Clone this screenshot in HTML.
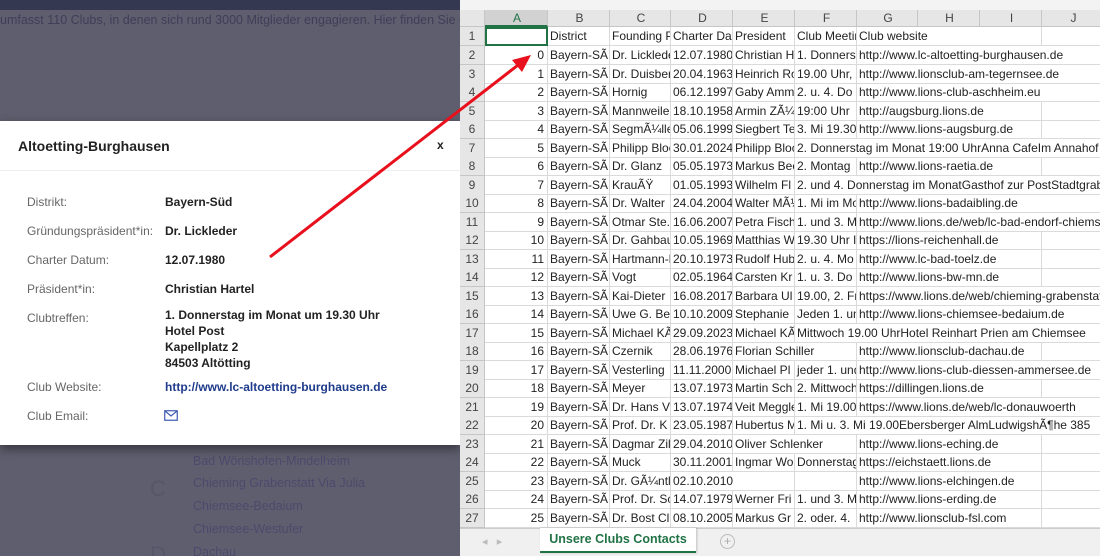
<!DOCTYPE html>
<html><head><meta charset="utf-8"><style>
*{margin:0;padding:0;box-sizing:border-box}
html,body{width:1100px;height:556px;overflow:hidden}
body{position:relative;background:#5f5e6e;font-family:"Liberation Sans",sans-serif}
.topbar{position:absolute;left:0;top:0;width:460px;height:10px;background:#343850}
.bgtext{position:absolute;color:#4b4a6c;font-size:12.5px;white-space:nowrap}
.modal{position:absolute;left:0;top:121px;width:460px;height:324px;background:#fff;box-shadow:0 4px 10px rgba(0,0,0,.45)}
.modal h1{position:absolute;left:18px;top:17px;font-size:14px;font-weight:bold;color:#222}
.modal .x{position:absolute;left:437px;top:17px;font-size:12px;font-weight:bold;color:#222}
.modal .hr{position:absolute;left:0;top:49px;width:460px;height:1px;background:#eee}
.lb{position:absolute;left:27px;font-size:12px;color:#666}
.vl{position:absolute;left:165px;font-size:12px;font-weight:bold;color:#222;line-height:16px}
.xl{position:absolute;left:460px;top:0;width:640px;height:556px;background:#fff;font-size:12px;color:#222;overflow:hidden}
.tb{position:absolute;left:0;top:0;width:640px;height:10px;background:#f3f3f3}
.row{position:absolute;left:0;height:19px;display:flex;width:700px}
.row span{display:block;flex:none;height:19px;line-height:18px;white-space:nowrap;overflow:hidden;border-right:1px solid #dadada;border-bottom:1px solid #dadada;padding-left:2px}
.row span.h{width:25px;background:#e6e6e6;color:#444;text-align:center;padding:0;border-color:#c6c6c6;font-size:12px}
.row span.a{width:63px;text-align:right;padding-right:3px}
.hdr span{background:#e6e6e6;text-align:center;color:#444;border-color:#c6c6c6;height:17px;line-height:17px}
.tabs{position:absolute;left:0;top:528px;width:640px;height:28px;background:#f0f0f0;border-top:1px solid #ccc}
.tab{position:absolute;left:80px;top:-1px;width:156px;height:25px;background:#fff;border-bottom:2px solid #217346;color:#217346;font-weight:bold;font-size:12.5px;text-align:center;line-height:22px;box-shadow:1px 0 2px rgba(0,0,0,.2)}
</style></head><body>
<div class="topbar"></div>
<div class="bgtext" style="left:0;top:13px;color:#3e3e58">umfasst 110 Clubs, in denen sich rund 3000 Mitglieder engagieren. Hier finden Sie den Cl</div>
<div class="bgtext" style="left:193px;top:454px">Bad Wörishofen-Mindelheim</div>
<div class="bgtext" style="left:150px;top:476px;font-size:22px;color:#56566a">C</div>
<div class="bgtext" style="left:193px;top:476px">Chieming Grabenstatt Via Julia</div>
<div class="bgtext" style="left:193px;top:499px">Chiemsee-Bedaium</div>
<div class="bgtext" style="left:193px;top:522px">Chiemsee-Westufer</div>
<div class="bgtext" style="left:150px;top:542px;font-size:22px;color:#56566a">D</div>
<div class="bgtext" style="left:193px;top:545px">Dachau</div>

<div class="modal">
<h1>Altoetting-Burghausen</h1><div class="x">x</div><div class="hr"></div>
<div class="lb" style="top:74px">Distrikt:</div><div class="vl" style="top:73px">Bayern-Süd</div>
<div class="lb" style="top:103px">Gründungspräsident*in:</div><div class="vl" style="top:102px">Dr. Lickleder</div>
<div class="lb" style="top:132px">Charter Datum:</div><div class="vl" style="top:131px">12.07.1980</div>
<div class="lb" style="top:161px">Präsident*in:</div><div class="vl" style="top:160px">Christian Hartel</div>
<div class="lb" style="top:190px">Clubtreffen:</div><div class="vl" style="top:186px">1. Donnerstag im Monat um 19.30 Uhr<br>Hotel Post<br>Kapellplatz 2<br>84503 Altötting</div>
<div class="lb" style="top:259px">Club Website:</div><div class="vl" style="top:258px;color:#1f3c8c">http://www.lc-altoetting-burghausen.de</div>
<div class="lb" style="top:288px">Club Email:</div>
<svg style="position:absolute;left:164px;top:289px" width="14" height="11" viewBox="0 0 14 11"><rect x="0.75" y="0.75" width="12.5" height="9.5" fill="none" stroke="#3d5bb0" stroke-width="1.2"/><path d="M1 1 L7 6 L13 1" fill="none" stroke="#3d5bb0" stroke-width="1.2"/></svg>
</div>

<div class="xl">
<div class="tb"></div>
<div class="row hdr" style="top:10px"><span class="h" style="height:17px;background:#e6e6e6"></span><span style="width:63px;background:#d2d2d2;color:#217346;border-bottom:2px solid #217346">A</span><span style="width:62px">B</span><span style="width:61px">C</span><span style="width:62px">D</span><span style="width:62px">E</span><span style="width:62px">F</span><span style="width:61px">G</span><span style="width:62px">H</span><span style="width:62px">I</span><span style="width:62px">J</span></div>
<div class="row" style="top:27px"><span class="h">1</span><span class="a" style="border:2px solid #217346"></span><span style="width:62px">District</span><span style="width:61px">Founding President</span><span style="width:62px">Charter Date</span><span style="width:62px">President</span><span style="width:62px">Club Meeting</span><span style="width:185px">Club website</span><span style="width:62px"></span></div>
<div class="row" style="top:46px"><span class="h">2</span><span class="a">0</span><span style="width:62px">Bayern-SÃ</span><span style="width:61px">Dr. Lickleder</span><span style="width:62px">12.07.1980</span><span style="width:62px">Christian Hartel</span><span style="width:62px">1. Donnerstag</span><span style="width:247px">http://www.lc-altoetting-burghausen.de</span></div>
<div class="row" style="top:64.5px"><span class="h">3</span><span class="a">1</span><span style="width:62px">Bayern-SÃ</span><span style="width:61px">Dr. Duisberg</span><span style="width:62px">20.04.1963</span><span style="width:62px">Heinrich Ro</span><span style="width:62px">19.00 Uhr, x</span><span style="width:247px">http://www.lionsclub-am-tegernsee.de</span></div>
<div class="row" style="top:83px"><span class="h">4</span><span class="a">2</span><span style="width:62px">Bayern-SÃ</span><span style="width:61px">Hornig</span><span style="width:62px">06.12.1997</span><span style="width:62px">Gaby Ammer</span><span style="width:62px">2. u. 4. Do</span><span style="width:247px">http://www.lions-club-aschheim.eu</span></div>
<div class="row" style="top:101.5px"><span class="h">5</span><span class="a">3</span><span style="width:62px">Bayern-SÃ</span><span style="width:61px">Mannweiler</span><span style="width:62px">18.10.1958</span><span style="width:62px">Armin ZÃ¼rn</span><span style="width:62px">19:00 Uhr</span><span style="width:185px">http://augsburg.lions.de</span><span style="width:62px"></span></div>
<div class="row" style="top:120px"><span class="h">6</span><span class="a">4</span><span style="width:62px">Bayern-SÃ</span><span style="width:61px">SegmÃ¼ller</span><span style="width:62px">05.06.1999</span><span style="width:62px">Siegbert Teuf</span><span style="width:62px">3. Mi 19.30</span><span style="width:185px">http://www.lions-augsburg.de</span><span style="width:62px"></span></div>
<div class="row" style="top:138.5px"><span class="h">7</span><span class="a">5</span><span style="width:62px">Bayern-SÃ</span><span style="width:61px">Philipp Bloch</span><span style="width:62px">30.01.2024</span><span style="width:62px">Philipp Bloch</span><span style="width:309px">2. Donnerstag im Monat 19:00 UhrAnna CafeIm Annahof</span></div>
<div class="row" style="top:157px"><span class="h">8</span><span class="a">6</span><span style="width:62px">Bayern-SÃ</span><span style="width:61px">Dr. Glanz</span><span style="width:62px">05.05.1973</span><span style="width:62px">Markus Beck</span><span style="width:62px">2. Montag</span><span style="width:185px">http://www.lions-raetia.de</span><span style="width:62px"></span></div>
<div class="row" style="top:175.5px"><span class="h">9</span><span class="a">7</span><span style="width:62px">Bayern-SÃ</span><span style="width:61px">KrauÃŸ</span><span style="width:62px">01.05.1993</span><span style="width:62px">Wilhelm Fl</span><span style="width:309px">2. und 4. Donnerstag im MonatGasthof zur PostStadtgraben</span></div>
<div class="row" style="top:194px"><span class="h">10</span><span class="a">8</span><span style="width:62px">Bayern-SÃ</span><span style="width:61px">Dr. Walter</span><span style="width:62px">24.04.2004</span><span style="width:62px">Walter MÃ¼</span><span style="width:62px">1. Mi im Mo</span><span style="width:247px">http://www.lions-badaibling.de</span></div>
<div class="row" style="top:212.5px"><span class="h">11</span><span class="a">9</span><span style="width:62px">Bayern-SÃ</span><span style="width:61px">Otmar Ste.</span><span style="width:62px">16.06.2007</span><span style="width:62px">Petra Fischer</span><span style="width:62px">1. und 3. Mi</span><span style="width:247px">http://www.lions.de/web/lc-bad-endorf-chiemsee</span></div>
<div class="row" style="top:231px"><span class="h">12</span><span class="a">10</span><span style="width:62px">Bayern-SÃ</span><span style="width:61px">Dr. Gahbauer</span><span style="width:62px">10.05.1969</span><span style="width:62px">Matthias W</span><span style="width:62px">19.30 Uhr Im</span><span style="width:185px">https://lions-reichenhall.de</span><span style="width:62px"></span></div>
<div class="row" style="top:249.5px"><span class="h">13</span><span class="a">11</span><span style="width:62px">Bayern-SÃ</span><span style="width:61px">Hartmann-B</span><span style="width:62px">20.10.1973</span><span style="width:62px">Rudolf Hub</span><span style="width:62px">2. u. 4. Mo</span><span style="width:185px">http://www.lc-bad-toelz.de</span><span style="width:62px"></span></div>
<div class="row" style="top:268px"><span class="h">14</span><span class="a">12</span><span style="width:62px">Bayern-SÃ</span><span style="width:61px">Vogt</span><span style="width:62px">02.05.1964</span><span style="width:62px">Carsten Kr</span><span style="width:62px">1. u. 3. Do</span><span style="width:185px">http://www.lions-bw-mn.de</span><span style="width:62px"></span></div>
<div class="row" style="top:286.5px"><span class="h">15</span><span class="a">13</span><span style="width:62px">Bayern-SÃ</span><span style="width:61px">Kai-Dieter</span><span style="width:62px">16.08.2017</span><span style="width:62px">Barbara Ul</span><span style="width:62px">19.00, 2. Fr</span><span style="width:247px">https://www.lions.de/web/chieming-grabenstatt</span></div>
<div class="row" style="top:305px"><span class="h">16</span><span class="a">14</span><span style="width:62px">Bayern-SÃ</span><span style="width:61px">Uwe G. Be</span><span style="width:62px">10.10.2009</span><span style="width:62px">Stephanie</span><span style="width:62px">Jeden 1. und</span><span style="width:247px">http://www.lions-chiemsee-bedaium.de</span></div>
<div class="row" style="top:323.5px"><span class="h">17</span><span class="a">15</span><span style="width:62px">Bayern-SÃ</span><span style="width:61px">Michael KÃ</span><span style="width:62px">29.09.2023</span><span style="width:62px">Michael KÃ</span><span style="width:309px">Mittwoch 19.00 UhrHotel Reinhart Prien am Chiemsee</span></div>
<div class="row" style="top:342px"><span class="h">18</span><span class="a">16</span><span style="width:62px">Bayern-SÃ</span><span style="width:61px">Czernik</span><span style="width:62px">28.06.1976</span><span style="width:124px">Florian Schiller</span><span style="width:185px">http://www.lionsclub-dachau.de</span><span style="width:62px"></span></div>
<div class="row" style="top:360.5px"><span class="h">19</span><span class="a">17</span><span style="width:62px">Bayern-SÃ</span><span style="width:61px">Vesterling</span><span style="width:62px">11.11.2000</span><span style="width:62px">Michael Pl</span><span style="width:62px">jeder 1. und</span><span style="width:247px">http://www.lions-club-diessen-ammersee.de</span></div>
<div class="row" style="top:379px"><span class="h">20</span><span class="a">18</span><span style="width:62px">Bayern-SÃ</span><span style="width:61px">Meyer</span><span style="width:62px">13.07.1973</span><span style="width:62px">Martin Sch</span><span style="width:62px">2. Mittwoch</span><span style="width:185px">https://dillingen.lions.de</span><span style="width:62px"></span></div>
<div class="row" style="top:397.5px"><span class="h">21</span><span class="a">19</span><span style="width:62px">Bayern-SÃ</span><span style="width:61px">Dr. Hans V</span><span style="width:62px">13.07.1974</span><span style="width:62px">Veit Meggle</span><span style="width:62px">1. Mi 19.00</span><span style="width:247px">https://www.lions.de/web/lc-donauwoerth</span></div>
<div class="row" style="top:416px"><span class="h">22</span><span class="a">20</span><span style="width:62px">Bayern-SÃ</span><span style="width:61px">Prof. Dr. K</span><span style="width:62px">23.05.1987</span><span style="width:62px">Hubertus M</span><span style="width:309px">1. Mi u. 3. Mi 19.00Ebersberger AlmLudwigshÃ¶he 385</span></div>
<div class="row" style="top:434.5px"><span class="h">23</span><span class="a">21</span><span style="width:62px">Bayern-SÃ</span><span style="width:61px">Dagmar Zil</span><span style="width:62px">29.04.2010</span><span style="width:124px">Oliver Schlenker</span><span style="width:185px">http://www.lions-eching.de</span><span style="width:62px"></span></div>
<div class="row" style="top:453px"><span class="h">24</span><span class="a">22</span><span style="width:62px">Bayern-SÃ</span><span style="width:61px">Muck</span><span style="width:62px">30.11.2001</span><span style="width:62px">Ingmar Wolf</span><span style="width:62px">Donnerstag</span><span style="width:185px">https://eichstaett.lions.de</span><span style="width:62px"></span></div>
<div class="row" style="top:471.5px"><span class="h">25</span><span class="a">23</span><span style="width:62px">Bayern-SÃ</span><span style="width:61px">Dr. GÃ¼ntl</span><span style="width:124px">02.10.2010</span><span style="width:62px"></span><span style="width:185px">http://www.lions-elchingen.de</span><span style="width:62px"></span></div>
<div class="row" style="top:490px"><span class="h">26</span><span class="a">24</span><span style="width:62px">Bayern-SÃ</span><span style="width:61px">Prof. Dr. Sc</span><span style="width:62px">14.07.1979</span><span style="width:62px">Werner Fri</span><span style="width:62px">1. und 3. Mi</span><span style="width:185px">http://www.lions-erding.de</span><span style="width:62px"></span></div>
<div class="row" style="top:508.5px"><span class="h">27</span><span class="a">25</span><span style="width:62px">Bayern-SÃ</span><span style="width:61px">Dr. Bost Cl</span><span style="width:62px">08.10.2005</span><span style="width:62px">Markus Gr</span><span style="width:62px">2. oder. 4.</span><span style="width:185px">http://www.lionsclub-fsl.com</span><span style="width:62px"></span></div>
<div class="tabs"><span style="position:absolute;left:22px;top:6px;color:#bbb;font-size:11px">◂ &nbsp; ▸</span><div class="tab">Unsere Clubs Contacts</div><span style="position:absolute;left:260px;top:5px;width:15px;height:15px;border:1px solid #bbb;border-radius:50%;color:#aaa;font-size:12px;line-height:13px;text-align:center">+</span></div>
</div>

<svg style="position:absolute;left:0;top:0" width="1100" height="556"><line x1="270" y1="257" x2="522" y2="62" stroke="#e8101c" stroke-width="3"/><path d="M531 55 L512 60 L522 72 Z" fill="#e8101c"/></svg>
</body></html>
